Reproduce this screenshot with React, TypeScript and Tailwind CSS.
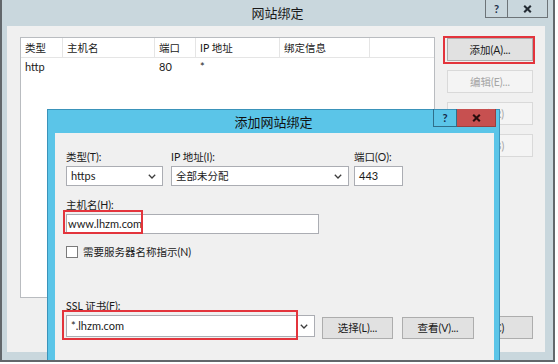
import type React from 'react';

const Chevron = () => (
  <svg width="8" height="5" viewBox="0 0 8 5" className="shrink-0">
    <path d="M0.8 0.8 L4 4 L7.2 0.8" fill="none" stroke="#3c3c3c" strokeWidth="1.3" />
  </svg>
);

const CloseGlyph = ({ color }: { color: string }) => (
  <svg width="9" height="8" viewBox="0 0 9 8">
    <path d="M1.2 0.8 L7.8 7.2 M7.8 0.8 L1.2 7.2" fill="none" stroke={color} strokeWidth="2.1" />
  </svg>
);

interface SelectBoxProps {
  value: string;
  latin?: boolean;
  className?: string;
}

const SelectBox: React.FC<SelectBoxProps> = ({ value, latin, className }) => (
  <div
    className={`flex items-center justify-between bg-white border border-[#abadb3] pl-[4px] pr-[6px] ${className ?? ''}`}
  >
    <span className={`truncate ${latin ? 'text-[11px]' : ''}`}>{value}</span>
    <Chevron />
  </div>
);

interface WinButtonProps {
  label: string;
  disabled?: boolean;
  className?: string;
}

const WinButton: React.FC<WinButtonProps> = ({ label, disabled, className }) => (
  <div
    className={`flex items-center justify-center border ${
      disabled ? 'border-[#d9d9d9] bg-[#f4f4f4] text-[#a6a6a6]' : 'border-[#adadad] bg-[#e1e1e1] text-[#1a1a1a]'
    } ${className ?? ''}`}
  >
    {label}
  </div>
);

const columns = [
  { title: '类型', w: 'w-[42px]' },
  { title: '主机名', w: 'w-[92px]' },
  { title: '端口', w: 'w-[41px]' },
  { title: 'IP 地址', w: 'w-[84px]' },
  { title: '绑定信息', w: 'w-[90px]' },
];

const row = ['http', '', '80', '*', ''];

export default function App() {
  return (
    <div className="w-[558px] h-[364px] bg-white overflow-hidden font-['Lato','Noto_Sans_CJK_SC',sans-serif] text-[10.5px] leading-[16px] text-[#1a1a1a]">
      <div className="relative w-[555px] h-[362px] border-x-2 border-b-2 border-[#62676b] overflow-hidden bg-[#c9d7dd]">
        {/* outer window: 网站绑定 */}
        <div className="flex flex-col h-full">
          <div className="relative h-[26px] shrink-0 flex items-center justify-center text-[13px] text-[#1a1a1a] pb-[1px]">
            网站绑定
            <div className="absolute right-[5px] top-0 flex h-[18px]">
              <div className="w-[23px] flex items-center justify-center border-x border-b border-[#6d7478] font-bold text-[#1c2f4a] text-[11px]">
                ?
              </div>
              <div className="w-[40px] flex items-center justify-center border-r border-b border-[#6d7478]">
                <CloseGlyph color="#232b33" />
              </div>
            </div>
          </div>
          <div className="flex-1 ml-[5px] mr-[8px] mb-[8px] bg-[#f0f0f0] flex pl-[13px] pt-[11px]">
            <div className="w-[415px] h-[261px] bg-white border border-[#b9bcc0]">
              <div className="flex h-[20px] border-b border-[#e5e5e5]">
                {columns.map((c) => (
                  <div key={c.title} className={`${c.w} h-full border-r border-[#e5e5e5] pl-[4px] flex items-center`}>
                    {c.title}
                  </div>
                ))}
              </div>
              <div className="flex h-[18px] text-[11px]">
                {columns.map((c, i) => (
                  <div key={c.title} className={`${c.w} pl-[4px] flex items-center`}>
                    {row[i]}
                  </div>
                ))}
              </div>
            </div>
            <div className="ml-[12px] pt-[1px] flex flex-col w-[86px]">
              <div className="flex flex-col gap-[9px]">
                <WinButton label="添加(A)..." className="h-[23px]" />
                <WinButton label="编辑(E)..." disabled className="h-[23px]" />
                <WinButton label="删除(R)" disabled className="h-[23px] pr-[5px]" />
                <WinButton label="浏览(B)" disabled className="h-[23px] pr-[5px]" />
              </div>
              <WinButton label="关闭(C)" className="h-[23px] mt-[159px] pr-[5px]" />
            </div>
          </div>
        </div>

        {/* inner dialog: 添加网站绑定 */}
        <div className="absolute left-[45px] top-[109px] w-[453px] h-[262px] bg-[#5bc5e8] border border-[#3a93ba] flex flex-col">
          <div className="relative h-[23px] shrink-0 flex items-center justify-center text-[13px] text-[#111]">
            添加网站绑定
            <div className="absolute right-[3px] top-[-1px] flex h-[18px]">
              <div className="w-[24px] flex items-center justify-center border-x border-b border-[#2f6f8a] font-bold text-[#142a48] text-[11px]">
                ?
              </div>
              <div className="w-[39px] flex items-center justify-center bg-[#c75050] border-r border-b border-[#98403f]">
                <CloseGlyph color="#2a0d0d" />
              </div>
            </div>
          </div>
          <div className="flex-1 ml-[7px] mr-[5px] bg-[#f0f0f0] pl-[11px] pt-[16px]">
            <div className="flex">
              <div className="w-[97px] flex flex-col">
                <span>类型(T):</span>
                <SelectBox value="https" latin className="mt-[1px] h-[20px]" />
              </div>
              <div className="ml-[8px] w-[178px] flex flex-col">
                <span>IP 地址(I):</span>
                <SelectBox value="全部未分配" className="mt-[1px] h-[20px]" />
              </div>
              <div className="ml-[5px] w-[49px] flex flex-col">
                <span>端口(O):</span>
                <div className="mt-[1px] h-[20px] bg-white border border-[#abadb3] pl-[4px] flex items-center text-[11px]">
                  443
                </div>
              </div>
            </div>

            <div className="mt-[11px] flex flex-col w-[253px]">
              <span>主机名(H):</span>
              <div className="mt-[1px] h-[20px] bg-white border border-[#abadb3] pl-[1px] flex items-center text-[11px]">
                www.lhzm.com
              </div>
            </div>

            <div className="mt-[10px] h-[16px] flex items-center">
              <div className="w-[12px] h-[12px] bg-white border border-[#7a7a7a]" />
              <span className="ml-[5px]">需要服务器名称指示(N)</span>
            </div>

            <div className="mt-[38px] flex flex-col">
              <span>SSL 证书(F):</span>
              <div className="mt-[1px] flex items-start">
                <SelectBox value="*.lhzm.com" latin className="w-[249px] h-[22px]" />
                <WinButton label="选择(L)..." className="ml-[7px] mt-[2px] w-[71px] h-[22px]" />
                <WinButton label="查看(V)..." className="ml-[9px] mt-[2px] w-[72px] h-[22px]" />
              </div>
            </div>
          </div>
        </div>

        {/* red annotation boxes */}
        <div className="absolute left-[441px] top-[36px] w-[92px] h-[28px] border-2 border-[#e3343c]" />
        <div className="absolute left-[61px] top-[210px] w-[80px] h-[24px] border-2 border-[#e3343c]" />
        <div className="absolute left-[60px] top-[310px] w-[236px] h-[30px] border-2 border-[#e3343c]" />
      </div>
    </div>
  );
}
